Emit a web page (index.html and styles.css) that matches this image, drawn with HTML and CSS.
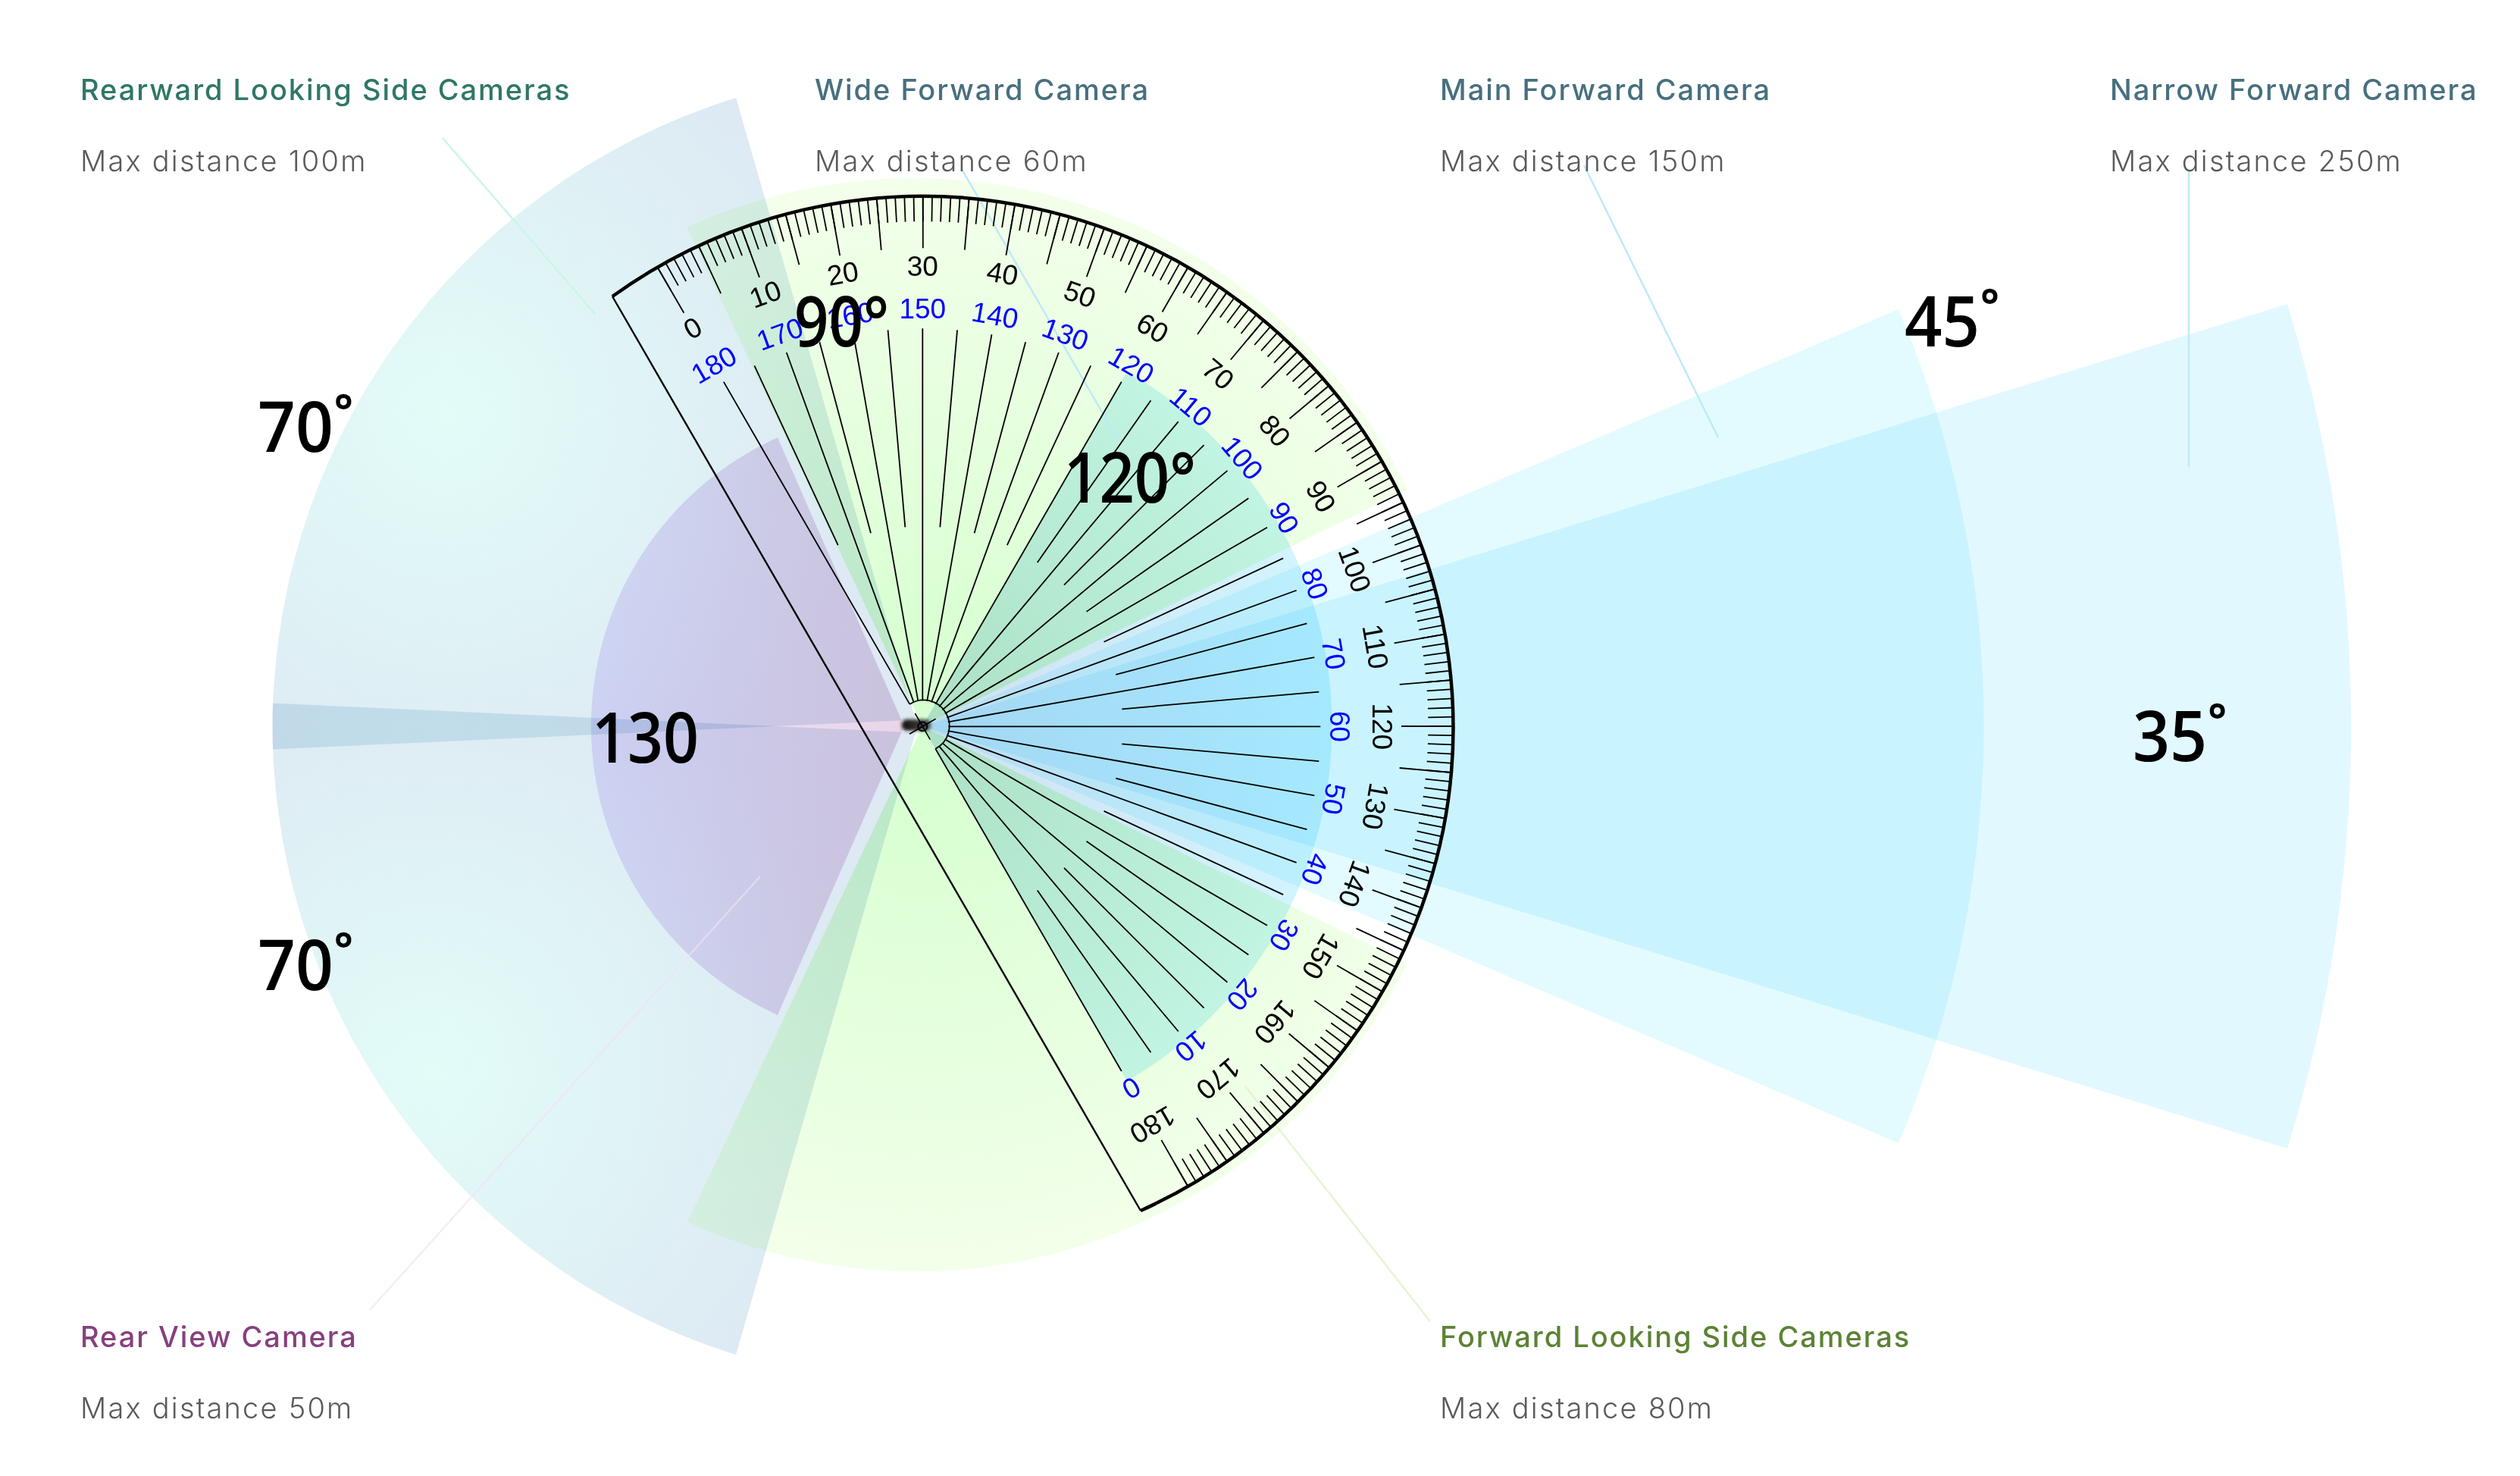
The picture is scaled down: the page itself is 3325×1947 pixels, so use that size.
FILE: index.html
```html
<!DOCTYPE html>
<html lang="en">
<head>
<meta charset="utf-8">
<title>Camera field of view</title>
<link rel="stylesheet" href="styles.css">
</head>
<body>
<main class="stage">
  <svg class="diagram" width="3325" height="1947" viewBox="0 0 3325 1947" xmlns="http://www.w3.org/2000/svg">
    <defs>
      <radialGradient id="gr-top" gradientUnits="userSpaceOnUse" cx="590" cy="545" r="560">
        <stop offset="0" stop-color="#e2fcf8"/><stop offset="1" stop-color="#dde9f3"/>
      </radialGradient>
      <radialGradient id="gr-bottom" gradientUnits="userSpaceOnUse" cx="570" cy="1415" r="560">
        <stop offset="0" stop-color="#e2fcf8"/><stop offset="1" stop-color="#dde9f3"/>
      </radialGradient>
      <radialGradient id="gr-side" gradientUnits="userSpaceOnUse" cx="1217" cy="958" r="722">
        <stop offset="0" stop-color="#d4ffce"/><stop offset="1" stop-color="#f3ffea"/>
      </radialGradient>
      <radialGradient id="gr-wide" gradientUnits="userSpaceOnUse" cx="1217" cy="958" r="540">
        <stop offset="0" stop-color="#cfe0f2"/><stop offset="1" stop-color="#d2f4fe"/>
      </radialGradient>
      <linearGradient id="gr-rear" gradientUnits="userSpaceOnUse" x1="775" y1="958" x2="1193" y2="958">
        <stop offset="0" stop-color="#ece2fe"/><stop offset="1" stop-color="#e9d5e8"/>
      </linearGradient>
      <linearGradient id="gr-car" gradientUnits="userSpaceOnUse" x1="1190" y1="956" x2="1232" y2="956">
        <stop offset="0" stop-color="#111"/><stop offset="1" stop-color="#555"/>
      </linearGradient>
      <filter id="soft" x="-30%" y="-60%" width="160%" height="220%">
        <feGaussianBlur stdDeviation="2.2"/>
      </filter>
    </defs>

    <g class="wedges">
      <path class="wedge" fill="#e2f8ff" d="M1217 958 L3018 401 A1885 1885 0 0 1 3018 1515 Z"/>
      <path class="wedge" fill="#e3fbff" d="M1217 958 L2505 408 A1400 1400 0 0 1 2505 1508 Z"/>
      <path class="wedge" fill="url(#gr-top)" d="M1208 949.5 L971 129 A870.5 870.5 0 0 0 360 988.5 Z"/>
      <path class="wedge" fill="url(#gr-bottom)" d="M1208 966.5 L971 1787 A870.5 870.5 0 0 1 360 927.5 Z"/>
      <path class="wedge" fill="url(#gr-side)" d="M1217 958 L906 300 A722 722 0 0 1 1857 646 Z"/>
      <path class="wedge" fill="url(#gr-side)" d="M1217 958 L907 1612 A722 722 0 0 0 1857 1270 Z"/>
      <path class="wedge" fill="url(#gr-wide)" d="M1217 958 L1487 490 A540 540 0 0 1 1487 1426 Z"/>
      <path class="wedge" fill="url(#gr-rear)" d="M1193 958 L1026 577 A418 418 0 0 0 1026 1339 Z"/>
    </g>

    <g class="callouts">
      <line class="callout callout-mint" x1="584" y1="182" x2="786" y2="415"/>
      <line class="callout callout-blue" x1="1269" y1="223" x2="1475" y2="580"/>
      <line class="callout callout-blue" x1="2090" y1="218" x2="2267" y2="577"/>
      <line class="callout callout-blue" x1="2888" y1="226" x2="2888" y2="616"/>
      <line class="callout callout-pink" x1="1003" y1="1156" x2="488" y2="1728"/>
      <line class="callout callout-green" x1="1643" y1="1433" x2="1887" y2="1743"/>
    </g>

    <rect class="car" x="1190" y="949" width="38" height="15" rx="6"/>

    <g class="protractor">
      <path class="edge" d="M1505 1597 L808 391"/>
      <path class="rim" d="M808 391 A700 700 0 1 1 1505 1597"/>
      <g transform="translate(1217.3 958.3)">
        <path class="tick tick-short" pathLength="181" d="M-346.1 -587.6 A682 682 0 1 1 335.8 593.6"/>
        <path class="tick tick-long" pathLength="181" d="M-337.2 -572.5 A664.5 664.5 0 1 1 327.2 578.4"/>
        <path class="hub" d="M-17 -29.4 A34 34 0 1 1 17 29.4"/>
        <circle class="pin" r="6"/>
        <path class="cross" d="M-10 -17.3 L10 17.3 M-17.3 10 L17.3 -10"/>

        <g class="spokes">
          <line x1="34" x2="525" transform="rotate(-120)"/><line x1="34" x2="525" transform="rotate(-110)"/>
          <line x1="34" x2="525" transform="rotate(-100)"/><line x1="34" x2="525" transform="rotate(-90)"/>
          <line x1="34" x2="525" transform="rotate(-80)"/><line x1="34" x2="525" transform="rotate(-70)"/>
          <line x1="34" x2="525" transform="rotate(-60)"/><line x1="34" x2="525" transform="rotate(-50)"/>
          <line x1="34" x2="525" transform="rotate(-40)"/><line x1="34" x2="525" transform="rotate(-30)"/>
          <line x1="34" x2="525" transform="rotate(-20)"/><line x1="34" x2="525" transform="rotate(-10)"/>
          <line x1="34" x2="525"/><line x1="34" x2="525" transform="rotate(10)"/>
          <line x1="34" x2="525" transform="rotate(20)"/><line x1="34" x2="525" transform="rotate(30)"/>
          <line x1="34" x2="525" transform="rotate(40)"/><line x1="34" x2="525" transform="rotate(50)"/>
          <line x1="34" x2="525" transform="rotate(60)"/>
          <line x1="264" x2="525" transform="rotate(-115)"/><line x1="264" x2="525" transform="rotate(-105)"/>
          <line x1="264" x2="525" transform="rotate(-95)"/><line x1="264" x2="525" transform="rotate(-85)"/>
          <line x1="264" x2="525" transform="rotate(-75)"/><line x1="264" x2="525" transform="rotate(-65)"/>
          <line x1="264" x2="525" transform="rotate(-55)"/><line x1="264" x2="525" transform="rotate(-45)"/>
          <line x1="264" x2="525" transform="rotate(-35)"/><line x1="264" x2="525" transform="rotate(-25)"/>
          <line x1="264" x2="525" transform="rotate(-15)"/><line x1="264" x2="525" transform="rotate(-5)"/>
          <line x1="264" x2="525" transform="rotate(5)"/><line x1="264" x2="525" transform="rotate(15)"/>
          <line x1="264" x2="525" transform="rotate(25)"/><line x1="264" x2="525" transform="rotate(35)"/>
          <line x1="264" x2="525" transform="rotate(45)"/><line x1="264" x2="525" transform="rotate(55)"/>
        </g>

        <g class="scale scale-outer">
          <text y="-594" transform="rotate(-30)">0</text><text y="-594" transform="rotate(-20)">10</text>
          <text y="-594" transform="rotate(-10)">20</text><text y="-594">30</text>
          <text y="-594" transform="rotate(10)">40</text><text y="-594" transform="rotate(20)">50</text>
          <text y="-594" transform="rotate(30)">60</text><text y="-594" transform="rotate(40)">70</text>
          <text y="-594" transform="rotate(50)">80</text><text y="-594" transform="rotate(60)">90</text>
          <text y="-594" transform="rotate(70)">100</text><text y="-594" transform="rotate(80)">110</text>
          <text y="-594" transform="rotate(90)">120</text><text y="-594" transform="rotate(100)">130</text>
          <text y="-594" transform="rotate(110)">140</text><text y="-594" transform="rotate(120)">150</text>
          <text y="-594" transform="rotate(130)">160</text><text y="-594" transform="rotate(140)">170</text>
          <text y="-594" transform="rotate(150)">180</text>
        </g>
        <g class="scale scale-inner">
          <text y="-538" transform="rotate(-30)">180</text><text y="-538" transform="rotate(-20)">170</text>
          <text y="-538" transform="rotate(-10)">160</text><text y="-538">150</text>
          <text y="-538" transform="rotate(10)">140</text><text y="-538" transform="rotate(20)">130</text>
          <text y="-538" transform="rotate(30)">120</text><text y="-538" transform="rotate(40)">110</text>
          <text y="-538" transform="rotate(50)">100</text><text y="-538" transform="rotate(60)">90</text>
          <text y="-538" transform="rotate(70)">80</text><text y="-538" transform="rotate(80)">70</text>
          <text y="-538" transform="rotate(90)">60</text><text y="-538" transform="rotate(100)">50</text>
          <text y="-538" transform="rotate(110)">40</text><text y="-538" transform="rotate(120)">30</text>
          <text y="-538" transform="rotate(130)">20</text><text y="-538" transform="rotate(140)">10</text>
          <text y="-538" transform="rotate(150)">0</text>
        </g>
      </g>
    </g>

    <g class="angles">
      <text x="340" y="596" textLength="127" lengthAdjust="spacingAndGlyphs">70˚</text>
      <text x="340" y="1306" textLength="127" lengthAdjust="spacingAndGlyphs">70˚</text>
      <text x="1048" y="457" textLength="125" lengthAdjust="spacingAndGlyphs">90°</text>
      <text x="1404" y="663" textLength="174" lengthAdjust="spacingAndGlyphs">120°</text>
      <text x="781" y="1006" textLength="141" lengthAdjust="spacingAndGlyphs">130</text>
      <text x="2513" y="457" textLength="126" lengthAdjust="spacingAndGlyphs">45˚</text>
      <text x="2814" y="1004" textLength="125" lengthAdjust="spacingAndGlyphs">35˚</text>
    </g>
  </svg>

  <section class="legend legend-top">
    <div class="cam cam-a"><h3 class="cam-name name-mint">Rearward Looking Side Cameras</h3><p class="cam-range">Max distance 100m</p></div>
    <div class="cam cam-b"><h3 class="cam-name name-slate">Wide Forward Camera</h3><p class="cam-range">Max distance 60m</p></div>
    <div class="cam cam-c"><h3 class="cam-name name-slate">Main Forward Camera</h3><p class="cam-range">Max distance 150m</p></div>
    <div class="cam cam-d"><h3 class="cam-name name-slate">Narrow Forward Camera</h3><p class="cam-range">Max distance 250m</p></div>
  </section>
  <section class="legend legend-bottom">
    <div class="cam cam-e"><h3 class="cam-name name-purple">Rear View Camera</h3><p class="cam-range">Max distance 50m</p></div>
    <div class="cam"><h3 class="cam-name name-green">Forward Looking Side Cameras</h3><p class="cam-range">Max distance 80m</p></div>
  </section>
</main>
</body>
</html>
```

FILE: styles.css
```css
html, body {
  margin: 0;
  padding: 0;
  background: #fff;
}

.stage {
  position: relative;
  width: 3325px;
  height: 1947px;
  overflow: hidden;
  background: #fff;
  isolation: isolate;
  display: flex;
  flex-direction: column;
  justify-content: space-between;
  font-family: Inter, "Liberation Sans", sans-serif;
}

.diagram {
  position: absolute;
  left: 0;
  top: 0;
}

.wedge {
  mix-blend-mode: multiply;
}

.callout {
  stroke-width: 2.5;
  fill: none;
}
.callout-mint { stroke: #caf5ea; }
.callout-blue { stroke: #bfe9f9; }
.callout-pink { stroke: #efe2f3; opacity: 0.65; }
.callout-green { stroke: #e4f5d3; }

.car {
  fill: url(#gr-car);
  filter: url(#soft);
}

.edge, .rim, .tick, .hub, .cross, .pin, .spokes line {
  fill: none;
  stroke: #000;
}
.edge { stroke-width: 2.4; }
.rim { stroke-width: 4.5; }
.tick-short {
  stroke-width: 34;
  stroke-dasharray: 0.15 0.85;
  stroke-dashoffset: -0.425;
}
.tick-long {
  stroke-width: 69;
  stroke-dasharray: 0.155 4.845;
  stroke-dashoffset: -0.4225;
}
.hub { stroke-width: 1.8; }
.pin { stroke-width: 1.8; }
.cross { stroke-width: 1.6; }
.spokes line { stroke-width: 1.8; }

.scale text {
  font-family: "Liberation Sans", Arial, sans-serif;
  font-size: 37px;
  text-anchor: middle;
}
.scale-outer text { fill: #000; }
.scale-inner text { fill: #0000ff; }

.angles text {
  font-family: "Open Sans", "Liberation Sans", sans-serif;
  font-size: 92px;
  font-weight: 600;
  fill: #000;
}

.legend {
  position: relative;
  display: flex;
}
.legend-top {
  padding: 95px 0 0 106px;
}
.legend-bottom {
  padding: 0 0 67px 106px;
}

.cam-a { width: 969px; }
.cam-b { width: 825px; }
.cam-c { width: 884px; }
.cam-d { width: 530px; }
.cam-e { width: 1794px; }

.cam-name {
  margin: 0;
  font-size: 38px;
  line-height: 46px;
  font-weight: 500;
  letter-spacing: 1.95px;
  white-space: nowrap;
  filter: blur(0.6px);
}
.cam-range {
  margin: 48px 0 0;
  font-size: 38px;
  line-height: 46px;
  font-weight: 300;
  color: #5a5a5a;
  letter-spacing: 2.2px;
  white-space: nowrap;
  filter: blur(0.6px);
}

.name-mint { color: #2f7767; }
.name-slate { color: #47707f; }
.name-purple { color: #87407f; }
.name-green { color: #5c8234; }
```
